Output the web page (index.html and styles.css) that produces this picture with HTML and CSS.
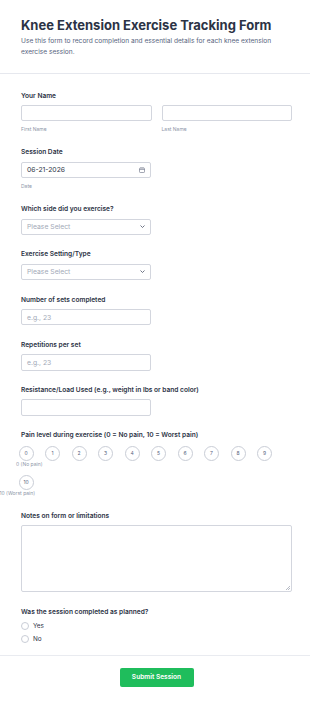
FILE: index.html
```html
<!DOCTYPE html>
<html lang="en">
<head>
<meta charset="utf-8">
<title>Knee Extension Exercise Tracking Form</title>
<link rel="stylesheet" href="styles.css">
</head>
<body>
<div class="page">
  <header class="header">
    <h1 class="title">Knee Extension Exercise Tracking Form</h1>
    <p class="subtitle">Use this form to record completion and essential details for each knee extension exercise session.</p>
  </header>

  <form class="form">
    <div class="field">
      <div class="label">Your Name</div>
      <div class="name-row">
        <div class="name-col">
          <div class="input"></div>
          <div class="sublabel">First Name</div>
        </div>
        <div class="name-col">
          <div class="input"></div>
          <div class="sublabel">Last Name</div>
        </div>
      </div>
    </div>

    <div class="field">
      <div class="label">Session Date</div>
      <div class="input half with-icon">
        <span class="value">06-21-2026</span>
        <svg class="cal" viewBox="0 0 12 12" width="6" height="6"><rect x="1" y="2" width="10" height="9" rx="1.5" fill="none" stroke="#6f7689" stroke-width="1.3"/><line x1="1" y1="5" x2="11" y2="5" stroke="#6f7689" stroke-width="1.2"/><line x1="4" y1="0.5" x2="4" y2="3" stroke="#6f7689" stroke-width="1.2"/><line x1="8" y1="0.5" x2="8" y2="3" stroke="#6f7689" stroke-width="1.2"/></svg>
      </div>
      <div class="sublabel">Date</div>
    </div>

    <div class="field">
      <div class="label">Which side did you exercise?</div>
      <div class="input half with-icon">
        <span class="placeholder">Please Select</span>
        <svg class="chev" viewBox="0 0 10 6" width="5" height="3"><path d="M1 1 L5 5 L9 1" fill="none" stroke="#4b5368" stroke-width="1.6"/></svg>
      </div>
    </div>

    <div class="field">
      <div class="label">Exercise Setting/Type</div>
      <div class="input half with-icon">
        <span class="placeholder">Please Select</span>
        <svg class="chev" viewBox="0 0 10 6" width="5" height="3"><path d="M1 1 L5 5 L9 1" fill="none" stroke="#4b5368" stroke-width="1.6"/></svg>
      </div>
    </div>

    <div class="field">
      <div class="label">Number of sets completed</div>
      <div class="input half"><span class="placeholder">e.g., 23</span></div>
    </div>

    <div class="field">
      <div class="label">Repetitions per set</div>
      <div class="input half"><span class="placeholder">e.g., 23</span></div>
    </div>

    <div class="field">
      <div class="label">Resistance/Load Used (e.g., weight in lbs or band color)</div>
      <div class="input half"></div>
    </div>

    <div class="field">
      <div class="label pain-label">Pain level during exercise (0 = No pain, 10 = Worst pain)</div>
      <div class="scale">
        <div class="scale-item"><span class="circle">0</span><span class="scale-note first">0 (No pain)</span></div>
        <div class="scale-item"><span class="circle">1</span></div>
        <div class="scale-item"><span class="circle">2</span></div>
        <div class="scale-item"><span class="circle">3</span></div>
        <div class="scale-item"><span class="circle">4</span></div>
        <div class="scale-item"><span class="circle">5</span></div>
        <div class="scale-item"><span class="circle">6</span></div>
        <div class="scale-item"><span class="circle">7</span></div>
        <div class="scale-item"><span class="circle">8</span></div>
        <div class="scale-item"><span class="circle">9</span></div>
        <div class="scale-item"><span class="circle">10</span><span class="scale-note last">10 (Worst pain)</span></div>
      </div>
    </div>

    <div class="field">
      <div class="label">Notes on form or limitations</div>
      <div class="textarea"><span class="grip"></span></div>
    </div>

    <div class="field last">
      <div class="label radio-label">Was the session completed as planned?</div>
      <div class="option"><span class="radio"></span><span>Yes</span></div>
      <div class="option"><span class="radio"></span><span>No</span></div>
    </div>
  </form>

  <div class="footer">
    <button class="submit" type="button">Submit Session</button>
  </div>
</div>
</body>
</html>
```

FILE: styles.css
```css
* { box-sizing: border-box; }

html, body {
  margin: 0;
  padding: 0;
  background: #ffffff;
}

body {
  font-family: Inter, "Noto Sans", "Liberation Sans", sans-serif;
  color: #2c3345;
}

.header {
  padding: 17px 18px 15.5px 21px;
  border-bottom: 1px solid #e6e8ee;
}

.title {
  margin: 0;
  font-size: 13px;
  line-height: 16px;
  font-weight: 700;
  color: #2c3345;
  letter-spacing: 0;
}

.subtitle {
  margin: 2.5px 0 0;
  font-size: 6.6px;
  line-height: 11px;
  color: #57647e;
}

.form {
  padding: 16.5px 18px 9px 21px;
  border-bottom: 1px solid #e9ebf0;
}

.field {
  margin-bottom: 14.5px;
}

.field.last {
  margin-bottom: 0;
}

.label {
  font-size: 6.6px;
  line-height: 10px;
  font-weight: 600;
  color: #2c3345;
  margin-bottom: 4.3px;
}

.name-row {
  display: flex;
  gap: 10px;
}

.name-col {
  flex: 1 1 0;
}

.input {
  height: 16.4px;
  border: 1px solid #d3d6de;
  border-radius: 2px;
  background: #fff;
  display: flex;
  align-items: center;
  padding: 0 5px;
  font-size: 6.8px;
}

.input.half {
  width: 130px;
}

.with-icon {
  justify-content: space-between;
}

.value {
  color: #2c3345;
}

.placeholder {
  color: #a3aab8;
}

.cal {
  display: block;
}

.chev {
  display: block;
}

.sublabel {
  margin-top: 3.7px;
  font-size: 5px;
  line-height: 8px;
  color: #8d96a8;
}

.pain-label {
  margin-bottom: 5.5px;
}

.scale {
  display: flex;
  flex-wrap: wrap;
  column-gap: 11.5px;
  row-gap: 7px;
  margin-left: -2.5px;
}

.scale-item {
  flex: 0 0 15px;
  width: 15px;
  min-width: 0;
  display: flex;
  flex-direction: column;
  align-items: flex-start;
}

.circle {
  width: 15px;
  height: 15px;
  border: 1px solid #c9cdd6;
  border-radius: 50%;
  display: flex;
  align-items: center;
  justify-content: center;
  font-size: 5px;
  color: #57647e;
}

.scale-note {
  font-size: 5px;
  line-height: 7px;
  color: #8d96a8;
  white-space: nowrap;
}

.scale-note.first {
  margin-left: -2.5px;
}

.scale-note.last {
  margin-left: -19px;
}

.textarea {
  height: 67px;
  border: 1px solid #d3d6de;
  border-radius: 2px;
  position: relative;
}

.grip {
  position: absolute;
  right: 1px;
  bottom: 1px;
  width: 4px;
  height: 4px;
  background: linear-gradient(135deg, transparent 45%, #b8bcc6 45%, #b8bcc6 55%, transparent 55%, transparent 70%, #b8bcc6 70%, #b8bcc6 80%, transparent 80%);
}

.radio-label {
  margin-bottom: 2.8px;
}

.option {
  display: flex;
  align-items: center;
  gap: 4px;
  height: 13px;
  font-size: 6.4px;
  color: #2c3345;
}

.radio {
  width: 8px;
  height: 8px;
  border: 1px solid #c9cdd6;
  border-radius: 50%;
  background: #fff;
}

.footer {
  display: flex;
  justify-content: center;
  padding: 12px 0 0 3px;
}

.submit {
  width: 74px;
  height: 19px;
  border: none;
  border-radius: 2px;
  background: #1fbd5c;
  color: #ffffff;
  font-family: Inter, "Noto Sans", "Liberation Sans", sans-serif;
  font-size: 6.6px;
  font-weight: 600;
  padding: 0;
}
```
